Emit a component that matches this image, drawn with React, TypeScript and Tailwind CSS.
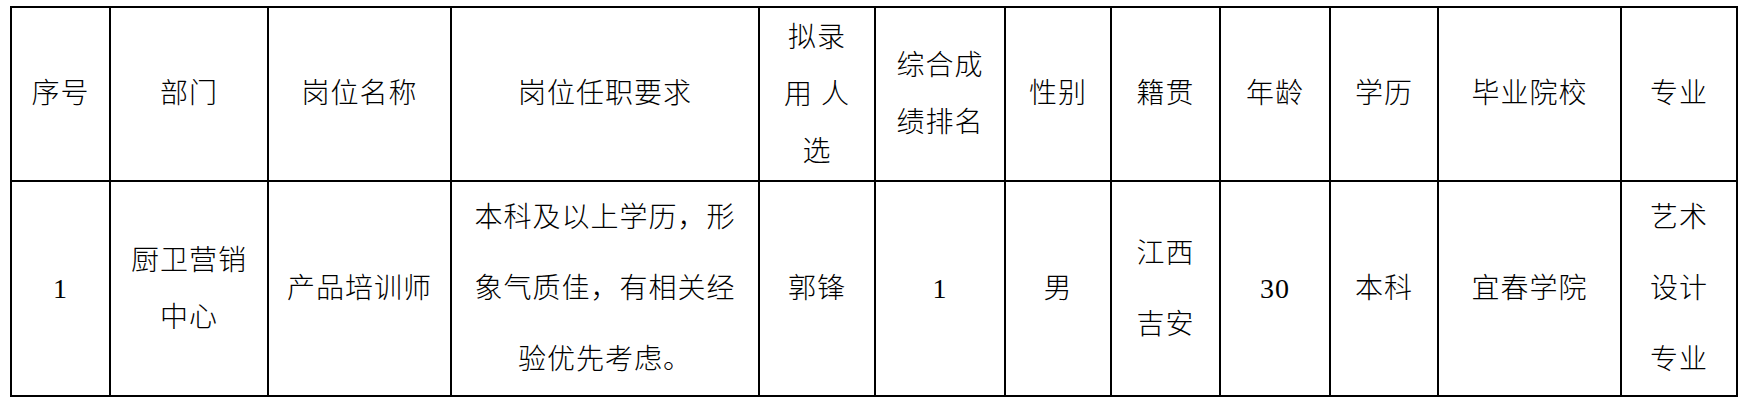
import React from 'react';

// column widths measured between the border centre lines
const COL_WIDTHS = [99, 158, 183, 308, 116, 130, 106, 109, 110, 108, 183, 116];

interface Cell {
  lines: string[];
  leading?: 'tight' | 'loose';
  numeric?: boolean;
}

const HEAD: Cell[] = [
  { lines: ['序号'] },
  { lines: ['部门'] },
  { lines: ['岗位名称'] },
  { lines: ['岗位任职要求'] },
  { lines: ['拟录', '用\u00a0人', '选'], leading: 'tight' },
  { lines: ['综合成', '绩排名'], leading: 'tight' },
  { lines: ['性别'] },
  { lines: ['籍贯'] },
  { lines: ['年龄'] },
  { lines: ['学历'] },
  { lines: ['毕业院校'] },
  { lines: ['专业'] },
];

const ROW: Cell[] = [
  { lines: ['1'], numeric: true },
  { lines: ['厨卫营销', '中心'], leading: 'tight' },
  { lines: ['产品培训师'] },
  { lines: ['本科及以上学历，形', '象气质佳，有相关经', '验优先考虑。'], leading: 'loose' },
  { lines: ['郭锋'] },
  { lines: ['1'], numeric: true },
  { lines: ['男'] },
  { lines: ['江西', '吉安'], leading: 'loose' },
  { lines: ['30'], numeric: true },
  { lines: ['本科'] },
  { lines: ['宜春学院'] },
  { lines: ['艺术', '设计', '专业'], leading: 'loose' },
];

function CellText({ cell }: { cell: Cell }) {
  const leading =
    cell.leading === 'loose'
      ? 'leading-[71px]'
      : cell.leading === 'tight'
      ? 'leading-[57px]'
      : 'leading-[40px]';
  return (
    <div className={`${leading} ${cell.numeric ? 'font-normal' : 'font-light'}`}>
      {cell.lines.map((line, i) => (
        <div key={i} className="whitespace-nowrap">
          {line}
        </div>
      ))}
    </div>
  );
}

export default function App() {
  return (
    <div className="min-h-[409px] w-[1747px] bg-white pl-[10px] pt-[6px] text-black">
      <table className="table-fixed border-collapse font-['Liberation_Serif','Noto_Sans_CJK_SC',serif] text-[28px] tracking-[1px]">
        <colgroup>
          {COL_WIDTHS.map((w, i) => (
            <col key={i} style={{ width: w }} />
          ))}
        </colgroup>
        <tbody>
          <tr className="h-[174px]">
            {HEAD.map((cell, i) => (
              <td key={i} className="border-2 border-black p-0 text-center align-middle">
                <CellText cell={cell} />
              </td>
            ))}
          </tr>
          <tr className="h-[213px]">
            {ROW.map((cell, i) => (
              <td key={i} className="border-2 border-black p-0 text-center align-middle">
                <CellText cell={cell} />
              </td>
            ))}
          </tr>
        </tbody>
      </table>
    </div>
  );
}
